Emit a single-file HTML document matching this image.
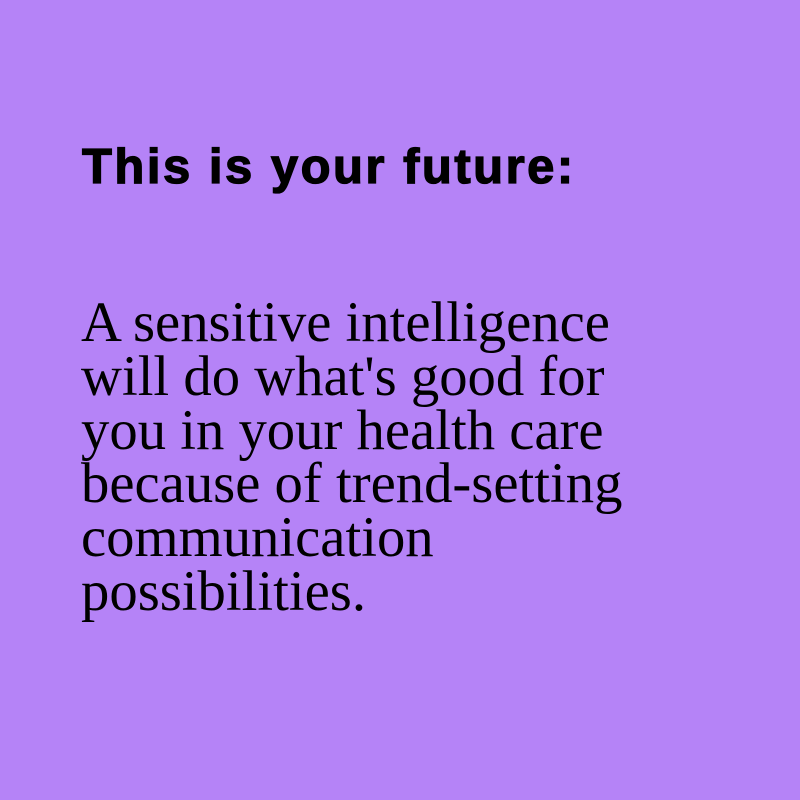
<!DOCTYPE html>
<html><head><meta charset="utf-8"><style>
html,body{margin:0;padding:0;width:800px;height:800px;background:#b583f7;overflow:hidden}
h1{position:absolute;left:82px;top:139px;margin:0;font:bold 49px/1.15 "Liberation Sans",sans-serif;letter-spacing:2.5px;-webkit-text-stroke:1.3px #000;color:#000;white-space:nowrap}
p{position:absolute;left:81px;top:296px;margin:0;font:56.7px/53.8px "Liberation Serif",serif;color:#000;white-space:nowrap}
</style></head><body>
<h1>This is your future:</h1>
<p>A sensitive intelligence<br>will do what's good for<br>you in your health care<br>because of trend-setting<br>communication<br>possibilities.</p>
</body></html>
